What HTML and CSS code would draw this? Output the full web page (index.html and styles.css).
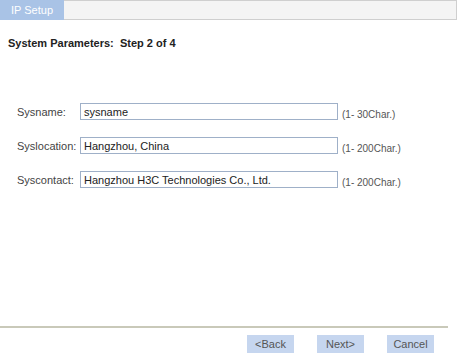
FILE: index.html
```html
<!DOCTYPE html>
<html lang="en">
<head>
    <meta charset="UTF-8">
    <title>IP Setup</title>
    <link rel="stylesheet" href="styles.css">
</head>
<body>
    <div class="tabbar">
        <div class="tab">IP Setup</div>
        <div class="tabrest"></div>
    </div>

    <h1 class="step">System Parameters:&nbsp; Step 2 of 4</h1>

    <div class="form">
        <div class="row">
            <label>Sysname:</label>
            <input type="text" value="sysname">
            <span class="hint">(1- 30Char.)</span>
        </div>
        <div class="row">
            <label>Syslocation:</label>
            <input type="text" value="Hangzhou, China">
            <span class="hint">(1- 200Char.)</span>
        </div>
        <div class="row">
            <label>Syscontact:</label>
            <input type="text" value="Hangzhou H3C Technologies Co., Ltd.">
            <span class="hint">(1- 200Char.)</span>
        </div>
    </div>

    <div class="footer">
        <div class="line"></div>
        <div class="buttons">
            <button>&lt;Back</button>
            <button>Next&gt;</button>
            <button>Cancel</button>
        </div>
    </div>
</body>
</html>
```

FILE: styles.css
```css
body {
    font-family: "Liberation Sans", Arial, sans-serif;
    font-size: 11px;
    color: #333;
    background-color: #fff;
    margin: 0;
    padding: 0;
    width: 460px;
    height: 354px;
    display: flex;
    flex-direction: column;
}

.tabbar {
    display: flex;
    height: 20px;
    margin-right: 3px;
}

.tab {
    width: 64px;
    background-color: #a9c3e6;
    color: #fff;
    line-height: 20px;
    text-align: center;
}

.tabrest {
    flex: 1;
    background-color: #f4f4f4;
    border: 1px solid #cfcfcf;
    border-left: none;
}

.step {
    font-size: 11px;
    font-weight: bold;
    color: #222;
    margin: 17px 0 0 8px;
}

.form {
    margin-top: 54px;
    display: flex;
    flex-direction: column;
    gap: 17px;
}

.row {
    display: flex;
    align-items: center;
    height: 17px;
}

label {
    width: 63px;
    padding-left: 17px;
    color: #444;
}

input {
    width: 250px;
    height: 15px;
    padding: 0 3px;
    margin: 0;
    border: 1px solid #9fb0c8;
    font-family: "Liberation Sans", Arial, sans-serif;
    font-size: 11px;
    color: #222;
}

.hint {
    margin-left: 4px;
    margin-top: 6px;
    color: #555;
    font-size: 10px;
}

.footer {
    margin-top: auto;
}

.line {
    height: 2px;
    width: 448px;
    background-color: #c9c9b9;
}

.buttons {
    display: flex;
    justify-content: flex-end;
    gap: 23px;
    padding: 7px 26px 1px 0;
}

button {
    width: 47px;
    height: 18px;
    background-color: #c6d6ef;
    color: #555;
    border: none;
    padding: 0;
    font-family: "Liberation Sans", Arial, sans-serif;
    font-size: 11px;
}
```
